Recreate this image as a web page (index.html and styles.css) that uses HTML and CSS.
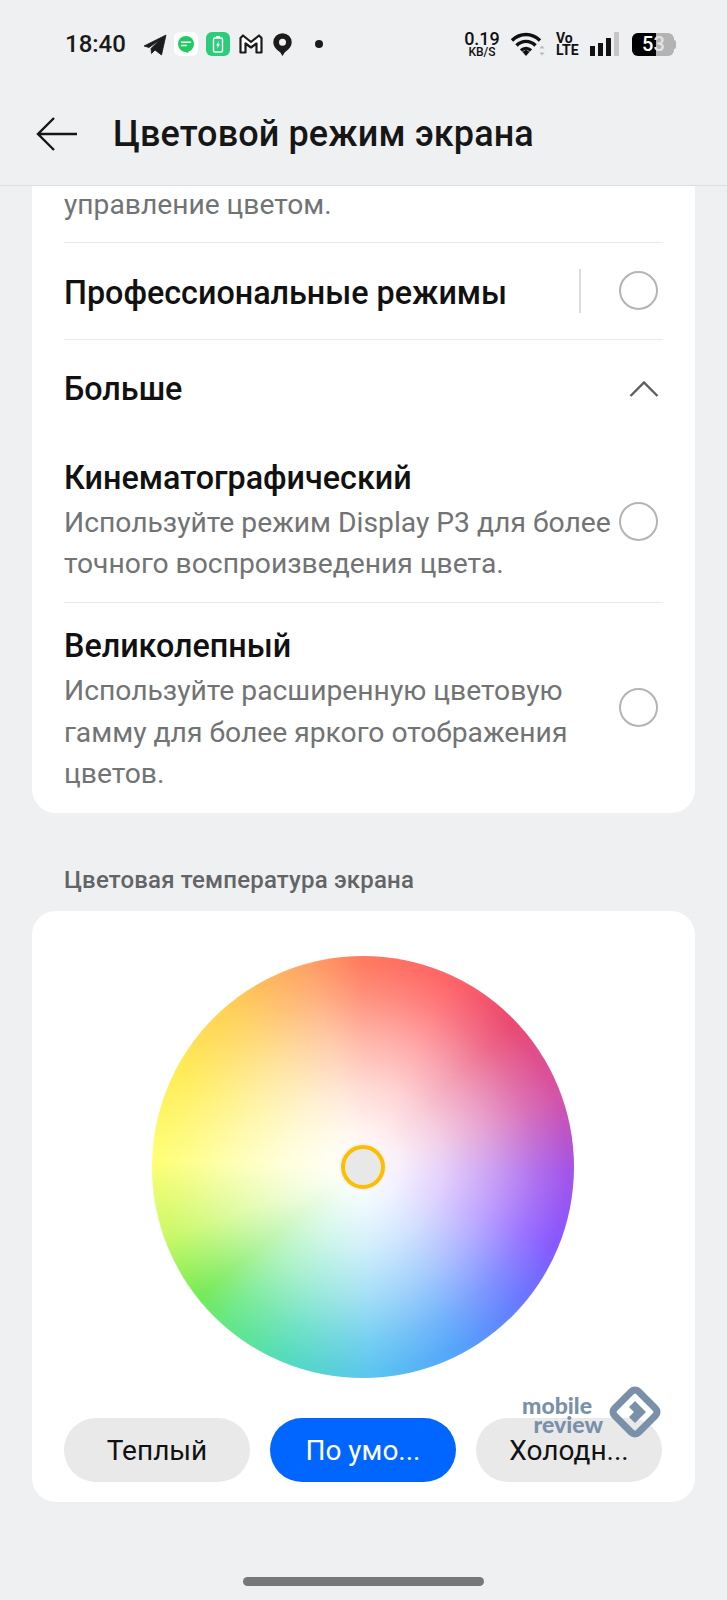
FILE: index.html
```html
<!DOCTYPE html>
<html lang="ru">
<head>
    <meta charset="UTF-8">
    <meta name="viewport" content="width=device-width, initial-scale=1.0">
    <title>Цветовой режим экрана</title>
    <link rel="stylesheet" href="styles.css">
</head>
<body>
    <header class="top">
        <div class="status">
            <span class="time">18:40</span>
            <div class="status-left">
                <svg class="ic-tg" viewBox="0 0 24 24"><path d="M1 14 23 3 18.500 23 12 18 8.500 21.500 8 16.500 16.500 8 6 15.500z" fill="#1b1b1b" stroke="#1b1b1b" stroke-width=".8" stroke-linejoin="round"/></svg>
                <span class="app app-white">
                    <svg viewBox="0 0 24 24"><circle cx="12" cy="12" r="8" fill="#1ecb5e"/><path d="M9 19l5 2 1-4z" fill="#1ecb5e"/><path d="M7.500 10.300h9M7.500 13.500h5" stroke="#fff" stroke-width="1.500" stroke-linecap="round"/></svg>
                </span>
                <span class="app app-green">
                    <svg viewBox="0 0 24 24"><rect x="7.500" y="6" width="9" height="14" rx="1.500" fill="none" stroke="#fff" stroke-width="1.400"/><rect x="10" y="4" width="4" height="2" fill="#fff"/><path d="M12.800 8.500 10.200 13.500h1.600l-.6 3.500 2.600-5h-1.600z" fill="#fff"/></svg>
                </span>
                <svg class="ic-m" viewBox="0 0 24 24"><path d="M1.500 20.500V6L4 3.500 12 10l8-6.500L22.500 6v14.500h-5V11.500L12 15.500l-5.500-4v9z" fill="#fff" stroke="#1b1b1b" stroke-width="2.200" stroke-linejoin="round"/></svg>
                <svg class="ic-pin" viewBox="0 0 24 28"><path fill-rule="evenodd" d="M12 1a10.500 10.500 0 0 1 10.500 10.500c0 5.500-4.500 9-8 11.500L12 27l-2.500-4C6 20.500 1.500 17 1.500 11.500A10.500 10.500 0 0 1 12 1zm0 6.500a4 4 0 1 0 0 8 4 4 0 0 0 0-8z" fill="#1b1b1b"/></svg>
                <span class="dot"></span>
            </div>
            <div class="status-right">
                <div class="speed"><b>0.19</b><small>KB/S</small></div>
                <svg class="ic-wifi" viewBox="0 0 34 24"><path d="M1 8.500C9 .5 21 .5 29 8.500M5.500 13.500C11 8 19 8 24.500 13.500" fill="none" stroke="#111" stroke-width="3.400"/><path d="M10 18.500c3-3 7-3 10 0" fill="none" stroke="#111" stroke-width="3.200"/><path d="M11.500 20 15 17.500 18.500 20 15 24z" fill="#111"/><path d="M31 13.500l2.500 3h-5zM31 23.500l2.500-3h-5z" fill="#b9b9b9"/></svg>
                <div class="volte"><span>Vo</span><span>LTE</span></div>
                <div class="signal"><i></i><i></i><i></i><i class="off"></i></div>
                <div class="battery"><span class="batt-fill"></span><span class="batt-num">5<em>3</em></span><span class="batt-cap"></span></div>
            </div>
        </div>
        <div class="titlebar">
            <svg class="back" viewBox="0 0 42 34"><path d="M41 17H2M18 1 2 17l16 16" fill="none" stroke="#161616" stroke-width="2.400"/></svg>
            <h1>Цветовой режим экрана</h1>
        </div>
    </header>

    <main class="content">
        <section class="card modes">
            <p class="clipped">управление цветом.</p>
            <div class="row pro">
                <span class="row-title">Профессиональные режимы</span>
                <span class="vbar"></span>
                <span class="radio"></span>
            </div>
            <div class="row more">
                <span class="row-title">Больше</span>
                <svg class="chevron" viewBox="0 0 30 16"><path d="M1.500 15 15 1.500 28.500 15" fill="none" stroke="#5f5f5f" stroke-width="2.400"/></svg>
            </div>
            <div class="option first">
                <div class="option-text">
                    <div class="row-title">Кинематографический</div>
                    <p>Используйте режим Display P3 для более точного воспроизведения цвета.</p>
                </div>
                <span class="radio"></span>
            </div>
            <div class="option last">
                <div class="option-text">
                    <div class="row-title">Великолепный</div>
                    <p>Используйте расширенную цветовую гамму для более яркого отображения цветов.</p>
                </div>
                <span class="radio"></span>
            </div>
        </section>

        <h2 class="section-label">Цветовая температура экрана</h2>

        <section class="card temp">
            <div class="wheel">
                <div class="wheel-fade"></div>
                <span class="knob"></span>
            </div>
            <div class="pills">
                <button class="pill">Теплый</button>
                <button class="pill active">По умо...</button>
                <button class="pill">Холодн...</button>
            </div>
            <div class="watermark">
                <div class="wm-text"><span>mobile</span><span>review</span></div>
                <svg viewBox="0 0 56 56"><rect x="11" y="11" width="34" height="34" rx="5" transform="rotate(45 28 28)" fill="none" stroke="#7a90a8" stroke-width="7"/><path d="M22 23l6-6 11 11-11 11-6-6 5-5z" fill="#7a90a8"/></svg>
            </div>
        </section>
    </main>

    <div class="home-bar"></div>
</body>
</html>
```

FILE: styles.css
```css
* {
    box-sizing: border-box;
}
html, body {
    margin: 0;
    padding: 0;
}
body {
    width: 727px;
    height: 1600px;
    overflow: hidden;
    background-color: #eff0f2;
    font-family: Roboto, "Noto Sans", sans-serif;
    color: #111;
    display: flex;
    flex-direction: column;
}

/* status bar + title */
.top {
    height: 186px;
    flex-shrink: 0;
    border-bottom: 1px solid #dcdddf;
}
.status {
    height: 88px;
    padding: 31px 53px 0 65px;
    display: flex;
    align-items: flex-start;
}
.time {
    font-size: 24px;
    font-weight: 500;
    line-height: 27px;
    width: 78px;
    color: #1a1a1a;
}
.status-left {
    display: flex;
    align-items: center;
    height: 26px;
}
.ic-tg {
    width: 24px;
    height: 24px;
    margin-right: 7px;
}
.app {
    width: 24px;
    height: 24px;
    border-radius: 6px;
    margin-right: 8px;
    display: block;
}
.app svg {
    display: block;
    width: 24px;
    height: 24px;
}
.app-white {
    background: #fff;
}
.app-green {
    background: #2dcb7c;
}
.ic-m {
    width: 24px;
    height: 24px;
    margin: 0 9px 0 1px;
}
.ic-pin {
    width: 21px;
    height: 25px;
}
.dot {
    width: 8px;
    height: 8px;
    border-radius: 50%;
    background: #1b1b1b;
    margin-left: 22px;
}
.status-right {
    margin-left: auto;
    display: flex;
    align-items: center;
    height: 26px;
}
.speed {
    width: 36px;
    display: flex;
    flex-direction: column;
    align-items: center;
    margin-right: 11px;
    color: #111;
}
.speed b {
    font-size: 18px;
    font-weight: 500;
    line-height: 15px;
}
.speed small {
    font-size: 12px;
    font-weight: 500;
    line-height: 12px;
}
.ic-wifi {
    width: 34px;
    height: 24px;
    margin-right: 11px;
}
.volte {
    width: 23px;
    display: flex;
    flex-direction: column;
    font-size: 14px;
    font-weight: 700;
    line-height: 12px;
    margin-right: 11px;
}
.signal {
    display: flex;
    align-items: flex-end;
    gap: 3px;
    height: 24px;
    margin-right: 13px;
}
.signal i {
    display: block;
    width: 5px;
    height: 10px;
    background: #111;
}
.signal i:nth-child(2) {
    height: 13px;
}
.signal i:nth-child(3) {
    height: 18px;
}
.signal i.off {
    height: 24px;
    background: #c6c6c6;
}
.battery {
    position: relative;
    width: 42px;
    height: 23px;
    border-radius: 6px;
    background: #b3b3b3;
}
.batt-fill {
    position: absolute;
    left: 0;
    top: 0;
    bottom: 0;
    width: 24px;
    background: #000;
    border-radius: 6px 0 0 6px;
}
.batt-num {
    position: absolute;
    left: 10px;
    top: 0;
    font-size: 20px;
    font-weight: 500;
    line-height: 23px;
    color: #fff;
}
.batt-num em {
    font-style: normal;
    color: #e4e4e4;
}
.batt-cap {
    position: absolute;
    right: -2px;
    top: 7px;
    width: 2px;
    height: 9px;
    border-radius: 0 2px 2px 0;
    background: #b3b3b3;
}
.titlebar {
    height: 97px;
    padding: 0 0 6px 36px;
    display: flex;
    align-items: center;
}
.back {
    width: 42px;
    height: 34px;
}
.titlebar h1 {
    margin: 0 0 0 35px;
    font-size: 36px;
    font-weight: 500;
    letter-spacing: .12px;
    color: #161616;
}

/* cards */
.content {
    padding: 0 32px;
    flex: 1;
}
.card {
    background: #fff;
    border-radius: 0 0 24px 24px;
    padding: 0 32px;
}
.modes {
    height: 627px;
}
.clipped {
    margin: 0;
    height: 57px;
    font-size: 28.2px;
    line-height: 38px;
    color: #727375;
    border-bottom: 1px solid #ebebeb;
}
.row {
    display: flex;
    align-items: center;
}
.row-title {
    font-size: 32.3px;
    font-weight: 500;
    color: #111;
    line-height: 40px;
}
.pro {
    height: 97px;
    border-bottom: 1px solid #ebebeb;
}
.pro .row-title {
    flex: 1;
    padding-top: 3px;
}
.vbar {
    width: 2px;
    height: 44px;
    background: #dcdcdc;
    margin-right: 38px;
    margin-bottom: 1px;
}
.radio {
    display: block;
    flex-shrink: 0;
    width: 39px;
    height: 39px;
    border: 2px solid #b4b4b4;
    border-radius: 50%;
    margin-right: 5px;
}
.pro .radio {
    margin-bottom: 2px;
}
.more {
    height: 99px;
    padding-bottom: 2px;
    justify-content: space-between;
}
.chevron {
    width: 30px;
    height: 16px;
    margin-right: 4px;
}
.option {
    display: flex;
    align-items: center;
}
.option.first {
    height: 164px;
    padding: 18px 0 17px;
    border-bottom: 1px solid #ebebeb;
}
.option.last {
    padding-top: 23px;
}
.option.last .radio {
    margin-bottom: 6px;
}
.option-text {
    flex: 1;
}
.option-text p {
    margin: 4px 0 0;
    font-size: 28.25px;
    line-height: 41.5px;
    color: #727375;
}
.section-label {
    margin: 0;
    height: 98px;
    padding: 54px 0 0 32px;
    font-size: 24px;
    font-weight: 500;
    letter-spacing: .18px;
    line-height: 26px;
    color: #636466;
}
.temp {
    position: relative;
    border-radius: 24px;
    height: 591px;
    padding-top: 45px;
}
.wheel {
    position: relative;
    width: 422px;
    height: 422px;
    margin-left: 88px;
    border-radius: 50%;
    background: conic-gradient(#ff7a60 0deg, #ff6468 25deg, #ea4a72 46deg, #d454a8 70deg, #a255ea 92deg, #8858ff 112deg, #6a78ff 130deg, #55a2fb 152deg, #5cc6f0 178deg, #55dcbc 202deg, #66e884 222deg, #78ea58 232deg, #c8f868 250deg, #ffff78 272deg, #ffec58 297deg, #ffd058 320deg, #ffa268 345deg, #ff7a60 360deg);
}
.wheel-fade {
    position: absolute;
    inset: 0;
    border-radius: 50%;
    background: radial-gradient(circle closest-side, #fff 0%, rgba(255,255,255,.9) 18%, rgba(255,255,255,.72) 38%, rgba(255,255,255,.46) 60%, rgba(255,255,255,.16) 82%, rgba(255,255,255,0) 97%);
}
.knob {
    position: absolute;
    left: 189px;
    top: 189px;
    width: 44px;
    height: 44px;
    border-radius: 50%;
    background: #e8e8e8;
    border: 4px solid #fdbe00;
    box-shadow: 0 0 0 2px rgba(240,240,240,.8);
}
.pills {
    display: flex;
    gap: 20px;
    margin: 40px 1px 0 0;
}
.pill {
    flex: 1;
    height: 64px;
    border: 0;
    border-radius: 32px;
    background: #e9e9e9;
    font-family: inherit;
    font-size: 28px;
    color: #111;
    padding: 0;
}
.pill.active {
    background: #0066ff;
    color: #fff;
}
.watermark {
    position: absolute;
    left: 490px;
    top: 473px;
    display: flex;
    align-items: center;
}
.wm-text {
    width: 81px;
    padding-top: 6px;
    margin-right: 4px;
    display: flex;
    flex-direction: column;
    font-family: Lato, sans-serif;
    font-weight: 900;
    font-size: 23px;
    line-height: 19px;
    color: #7a90a8;
}
.wm-text span:last-child {
    align-self: flex-end;
}
.watermark svg {
    width: 56px;
    height: 56px;
}

.home-bar {
    position: absolute;
    left: 243px;
    top: 1577px;
    width: 241px;
    height: 9px;
    border-radius: 5px;
    background: #777;
}
```
